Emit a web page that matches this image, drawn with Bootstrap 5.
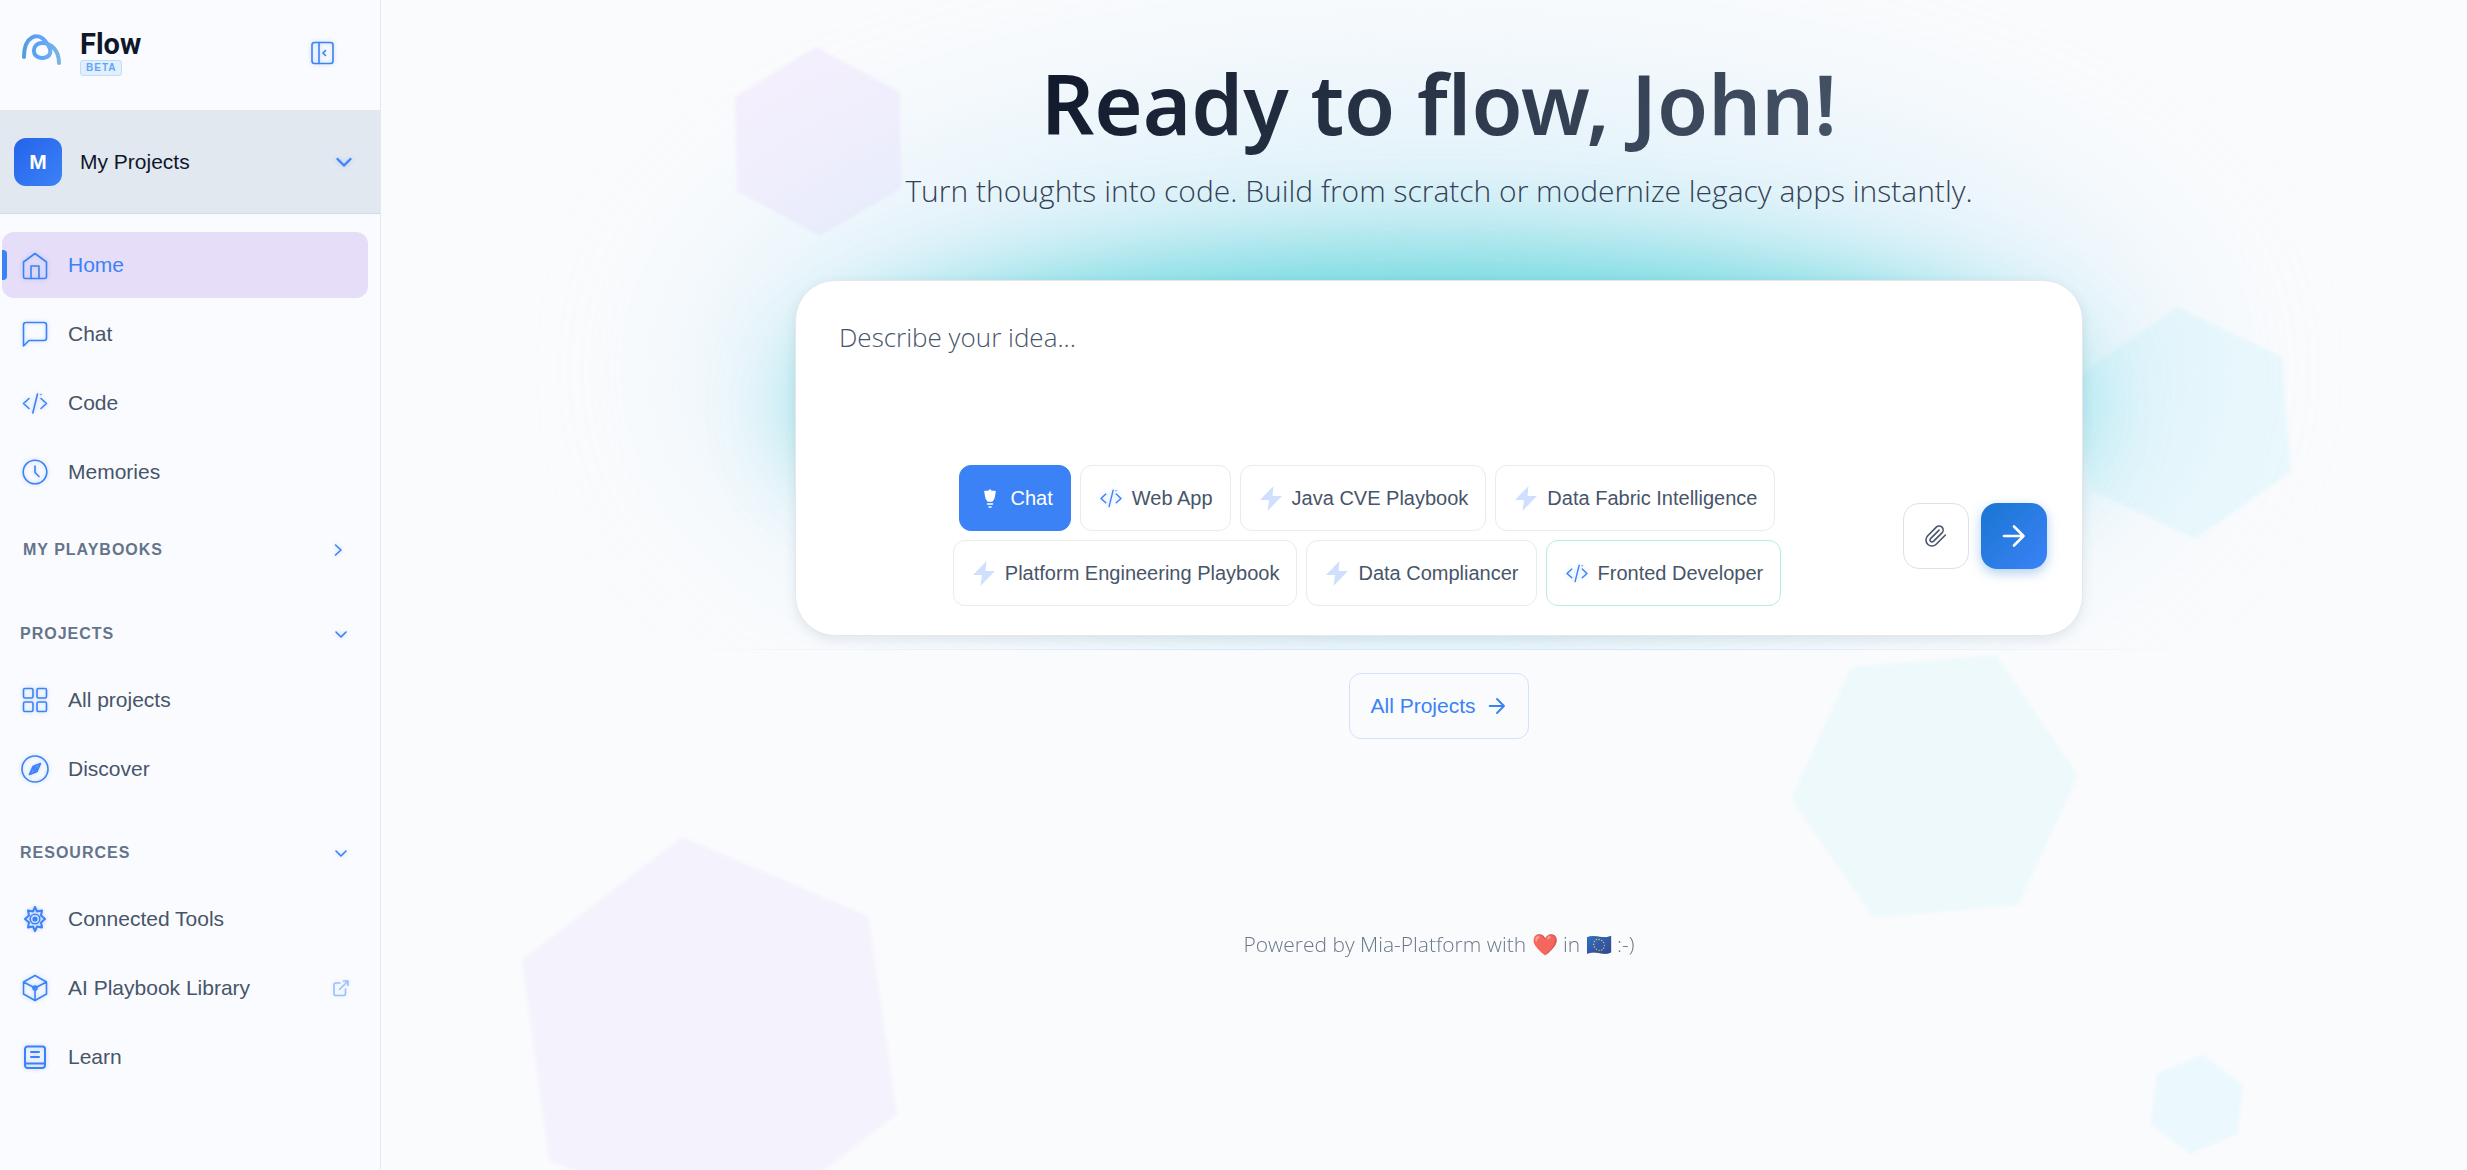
<!DOCTYPE html>
<html lang="en">
<head>
<meta charset="utf-8">
<meta name="viewport" content="width=device-width, initial-scale=1">
<title>Flow</title>
<link href="https://cdn.jsdelivr.net/npm/bootstrap@5.3.0/dist/css/bootstrap.min.css" rel="stylesheet">
<style>
  :root { --flow-blue: #3b82f6; --flow-text: #475569; }
  body { background: #fafbfd; font-family: "Liberation Sans", Arial, sans-serif; font-size: 21px; line-height: 24px; color: var(--flow-text); }
  .ico { width: 30px; height: 30px; flex: none; fill: none; stroke: currentColor; stroke-width: 1.6; stroke-linecap: round; stroke-linejoin: round; }
  .ico-26 { width: 26px; height: 26px; }
  .ico-24 { width: 24px; height: 24px; }
  .ico-22 { width: 22px; height: 22px; }
  .ico-bold { stroke-width: 2.6; }
  .plain { background: none; border: 0; padding: 0; text-align: left; color: inherit; }
  .glowing { filter: drop-shadow(0 0 2px rgba(59,130,246,.35)); color: var(--flow-blue); }

  .sidebar { width: 381px; flex: none; border-right: 1px solid #e6e9ef; background: #fafbfe; position: relative; }
  .side-head { height: 110px; padding: 0 42px 4px 16px; }
  .logo-mark { width: 50px; height: 50px; stroke-width: 4; }
  .app-name { font: 700 29px/32px Roboto, sans-serif; color: #0f172a; }
  .beta-tag { font-size: 10px; line-height: 14px; font-weight: 700; letter-spacing: 1px; color: #60a5fa; background: #e4effe; border: 1px solid #bfdbfe; border-radius: 3px; padding: 0 5px; }
  .brand-text { padding: 0 0 2px 14px; }
  .switcher { height: 104px; background: #e1e8f0; border-bottom: 1px solid #d3dbe6; padding: 0 21px 0 14px; color: #0f172a; gap: 18px; }
  .avatar-tile { width: 48px; height: 48px; border-radius: 12px; background: linear-gradient(135deg,#2563eb,#3b82f6); color: #fff; font-weight: 700; }
  .side-nav { padding: 18px 12px 0 2px; }
  .side-link { height: 66px; margin-bottom: 3px; padding: 0 12px 0 18px; gap: 18px; border-radius: 12px; color: var(--flow-text); text-decoration: none; position: relative; }
  .side-link.active { background: #e6ddf8; color: var(--flow-blue); }
  .side-link.active::before { content: ""; position: absolute; left: 0; top: 18px; height: 30px; width: 5px; border-radius: 0 4px 4px 0; background: var(--flow-blue); }
  .side-title { height: 48px; padding: 0 12px 0 18px; margin: 27px 0 9px; font-size: 16px; font-weight: 700; letter-spacing: 1px; color: #64748b; width: 100%; }
  .side-title.folded { margin: 21px 0 36px; padding: 0 15px 0 21px; }

  .workspace { min-width: 0; overflow: hidden; position: relative; padding-left: 30px; }
  .shapes { position: absolute; inset: 0; width: 100%; height: 100%; }
  .hero { position: relative; overflow: hidden; padding: 48px 24px 13px; }
  .hero-title { position: relative; z-index: 1; margin: 0 0 13px; font-family: "Noto Sans", sans-serif; font-weight: 600; font-size: 83px; line-height: 110px; background: linear-gradient(135deg,#0f172a,#475569); -webkit-background-clip: text; background-clip: text; color: transparent; }
  .hero-sub { position: relative; z-index: 1; margin: 0 0 69px; font-family: "Open Sans", "Noto Sans", sans-serif; font-weight: 300; font-size: 30px; line-height: 40px; color: #334155; }
  .prompt-wrap { width: 100%; max-width: 1288px; position: relative; }
  .aura, .aura-wide { position: absolute; border-radius: 50%; }
  .aura { left: 10px; right: 10px; top: -28px; height: 310px; background: #35cdd0; filter: blur(50px); opacity: .75; }
  .aura-wide { left: -90px; right: -90px; top: -190px; height: 560px; background: #b6e2f6; filter: blur(90px); opacity: .38; }
  .prompt-box { position: relative; background: #fff; border: 1px solid #e4e8ec; border-radius: 40px; padding: 35px 35px 29px; box-shadow: 0 4px 12px rgba(30,60,80,.10); }
  .prompt-box textarea { display: block; width: 100%; height: 149px; border: 0; resize: none; outline: 0; background: none; padding: 3px 8px; font: 300 26px/36px "Open Sans", sans-serif; color: #334155; }
  .prompt-box textarea::placeholder { color: #475569; opacity: 1; }
  .chips { gap: 9px; }
  .chip { height: 66px; border: 1px solid #e9ebee; border-radius: 12px; background: #fff; color: var(--flow-text); padding: 0 17px; gap: 8px; font-size: 20px; }
  .chip.on { background: var(--flow-blue); border-color: var(--flow-blue); color: #fff; }
  .chip.fresh { border-color: #b5ece4; }
  .sq-btn { width: 66px; height: 66px; flex: none; border-radius: 16px; border: 1px solid #dfe1e5; background: #fff; color: var(--flow-text); padding: 0; }
  .send-btn { border: 0; background: linear-gradient(135deg,#1976d2,#3b82f6); color: #fff; box-shadow: 0 4px 12px rgba(25,118,210,.35); }
  .tools { gap: 12px; }
  .rule-line { position: relative; height: 1px; margin: 0 12%; background: linear-gradient(90deg,transparent,#d6e5fa 35%,#d6e5fa 65%,transparent); }
  .all-btn { position: relative; height: 66px; border: 1px solid #d2e2fc; border-radius: 12px; color: var(--flow-blue); padding: 0 20px; gap: 10px; text-decoration: none; margin-top: 23px; }
  .credit { position: relative; margin: 190px 0 0; font: 300 21px/30px "Open Sans", sans-serif; color: #475569; opacity: .8; }
</style>
</head>
<body>
<svg width="0" height="0" class="position-absolute" aria-hidden="true">
  <defs>
    <symbol id="i-code" viewBox="0 0 30 30"><path d="M9 10.500 3.500 15.500 9 20.500M21 10.500l5.500 5L21 20.500M17.500 6 12.800 25"/><path d="M20.500 6.500h1" opacity=".6"/></symbol>
    <symbol id="i-bolt" viewBox="0 0 26 26"><path d="M15.500 1 2 15h9l-1.500 11L24 11h-9.500z" fill="#cfe0fd" stroke="none"/></symbol>
    <symbol id="i-down" viewBox="0 0 30 30"><path d="m8.500 12 6.500 6.500 6.500-6.500" stroke-width="2.200"/></symbol>
    <symbol id="i-arrow" viewBox="0 0 30 30"><path d="M5 15h19M15 5.500 24.500 15 15 24.500"/></symbol>
  </defs>
</svg>

<div class="d-flex min-vh-100">
  <aside class="sidebar d-flex flex-column">
    <header class="side-head d-flex align-items-center">
      <svg class="ico logo-mark" viewBox="0 0 50 50" aria-hidden="true">
        <defs><linearGradient id="lg" x1="0" x2="1"><stop stop-color="#549ddf"/><stop offset=".5" stop-color="#60a5fa"/><stop offset="1" stop-color="#7ab3e2"/></linearGradient></defs>
        <path stroke="url(#lg)" d="M8 29C8 8 22 3 30 14c7 9 5 15-3 16-12 1-12-15-1-15 9 0 17 7 17 20"/>
      </svg>
      <div class="brand-text d-flex flex-column align-items-start me-auto">
        <span class="app-name">Flow</span>
        <span class="beta-tag">BETA</span>
      </div>
      <button class="plain d-flex" aria-label="Collapse sidebar">
        <svg class="ico glowing" viewBox="0 0 30 30"><rect x="4" y="4.500" width="21" height="21" rx="2.500"/><path d="M11 4.500v21M17.500 12.500 15 15l2.500 2.500"/></svg>
      </button>
    </header>

    <button class="plain switcher d-flex align-items-center w-100">
      <span class="avatar-tile d-flex align-items-center justify-content-center">M</span>
      <span class="me-auto">My Projects</span>
      <svg class="ico glowing"><use href="#i-down"/></svg>
    </button>

    <nav class="side-nav">
      <a class="side-link active d-flex align-items-center" href="#"><svg class="ico glowing" viewBox="0 0 30 30"><path d="M3.500 12 15 3.500 26.500 12v14.500a2 2 0 0 1-2 2h-19a2 2 0 0 1-2-2zM11 28.500V16h8v12.500"/></svg>Home</a>
      <a class="side-link d-flex align-items-center" href="#"><svg class="ico glowing" viewBox="0 0 30 30"><path d="M3.500 27V6a2.500 2.500 0 0 1 2.500-2.500h18A2.500 2.500 0 0 1 26.500 6v13a2.500 2.500 0 0 1-2.500 2.500H9z"/></svg>Chat</a>
      <a class="side-link d-flex align-items-center" href="#"><svg class="ico glowing"><use href="#i-code"/></svg>Code</a>
      <a class="side-link d-flex align-items-center" href="#"><svg class="ico glowing" viewBox="0 0 30 30"><circle cx="15" cy="15" r="11.800"/><path d="M15 9v6.500l4 4"/></svg>Memories</a>
      <button class="plain side-title folded d-flex align-items-center justify-content-between">MY PLAYBOOKS<svg class="ico glowing" viewBox="0 0 30 30"><path d="m12.500 10 5.500 5-5.500 5"/></svg></button>
      <button class="plain side-title d-flex align-items-center justify-content-between">PROJECTS<svg class="ico glowing" viewBox="0 0 30 30"><path d="m10 13 5 5 5-5"/></svg></button>
      <a class="side-link d-flex align-items-center" href="#"><svg class="ico glowing" viewBox="0 0 30 30"><rect x="3.500" y="3.500" width="9.500" height="9.500" rx="1.500"/><rect x="17" y="3.500" width="9.500" height="9.500" rx="1.500"/><rect x="3.500" y="17" width="9.500" height="9.500" rx="1.500"/><rect x="17" y="17" width="9.500" height="9.500" rx="1.500"/></svg>All projects</a>
      <a class="side-link d-flex align-items-center" href="#"><svg class="ico glowing" viewBox="0 0 30 30"><circle cx="15" cy="15" r="13"/><path d="m20.500 9.500-3.500 8-7.500 3 3.500-8z" fill="currentColor" fill-opacity=".75"/><circle cx="15" cy="15" r="1.500"/></svg>Discover</a>
      <button class="plain side-title d-flex align-items-center justify-content-between">RESOURCES<svg class="ico glowing" viewBox="0 0 30 30"><path d="m10 13 5 5 5-5"/></svg></button>
      <a class="side-link d-flex align-items-center" href="#"><svg class="ico glowing" viewBox="0 0 30 30"><path d="m15 3 2 4.500 5-1-1 5 4 3.500-4 3.500 1 5-5-1-2 4.500-2-4.500-5 1 1-5L5 15l4-3.500-1-5 5 1z" stroke-width="2"/><circle cx="15" cy="15" r="4.800"/><circle cx="15" cy="15" r="1.800" fill="currentColor"/></svg>Connected Tools</a>
      <a class="side-link d-flex align-items-center" href="#"><svg class="ico glowing" viewBox="0 0 30 30"><path d="M15 2.500 26.500 9v12L15 27.500 3.500 21V9zM3.500 9 15 15l11.500-6M15 15v12.500"/><circle cx="15" cy="15" r="2"/></svg><span class="me-auto">AI Playbook Library</span><svg class="ico glowing opacity-50" viewBox="0 0 30 30"><path d="M14 10H9.500A1.500 1.500 0 0 0 8 11.500v9.500A1.500 1.500 0 0 0 9.500 22.500H18a1.500 1.500 0 0 0 1.500-1.500v-5M17.500 8H22v4.500M22 8l-8.500 8.500"/></svg></a>
      <a class="side-link d-flex align-items-center" href="#"><svg class="ico glowing" viewBox="0 0 30 30"><path d="M7.500 4.500h15A2.500 2.500 0 0 1 25 7v16.500a2.500 2.500 0 0 1-2.500 2.500h-15A2.500 2.500 0 0 1 5 23.500V7a2.500 2.500 0 0 1 2.500-2.500zM5 21.500h20M11 10h8M11 15h8" stroke-width="2"/></svg>Learn</a>
    </nav>
  </aside>

  <main class="workspace flex-grow-1">
    <svg class="shapes" viewBox="381 0 2086 1170" preserveAspectRatio="xMidYMin slice" aria-hidden="true">
      <defs><filter id="soft" color-interpolation-filters="sRGB"><feGaussianBlur stdDeviation="1.500"/></filter></defs>
      <g filter="url(#soft)">
        <path fill="#f4effd" d="m816 47 84 45 1 96-81 48-83-45-2-94z"/>
        <path fill="#eaf8fc" d="m2177 307 105 50 9 115-96 67-104-49-10-116z"/>
        <path fill="#eef9fb" d="m1851 667 145-12 82 120-60 130-144 13-83-119z"/>
        <path fill="#ebf8fd" d="m2203 1055 40 30-6 49-47 20-39-30 6-50z"/>
        <path fill="#f4f2fc" d="m682 837 186 79 29 198-163 126-185-80-27-200z"/>
      </g>
    </svg>
    <section class="hero d-flex flex-column align-items-center">
      <h1 class="hero-title text-center">Ready to flow, John!</h1>
      <p class="hero-sub text-center">Turn thoughts into code. Build from scratch or modernize legacy apps instantly.</p>
      <div class="prompt-wrap">
        <div class="aura-wide"></div><div class="aura"></div>
        <form class="prompt-box">
          <textarea aria-label="Describe your idea" placeholder="Describe your idea..."></textarea>
          <div class="d-flex align-items-center">
            <div class="chips d-flex flex-wrap justify-content-center flex-grow-1">
              <button type="button" class="chip on d-flex align-items-center"><svg class="ico ico-26" viewBox="0 0 26 26"><path d="m13 5 1.500 1.500L18 6.500 17 12c0 2-1.500 3.500-2 4h-4c-.5-.5-2-2-2-4L8 6.500l3.500 0zM10.500 19h5M12 22h2" fill="currentColor"/></svg>Chat</button>
              <button type="button" class="chip d-flex align-items-center"><svg class="ico ico-26 glowing"><use href="#i-code"/></svg>Web App</button>
              <button type="button" class="chip d-flex align-items-center"><svg class="ico ico-26"><use href="#i-bolt"/></svg>Java CVE Playbook</button>
              <button type="button" class="chip d-flex align-items-center"><svg class="ico ico-26"><use href="#i-bolt"/></svg>Data Fabric Intelligence</button>
              <button type="button" class="chip d-flex align-items-center"><svg class="ico ico-26"><use href="#i-bolt"/></svg>Platform Engineering Playbook</button>
              <button type="button" class="chip d-flex align-items-center"><svg class="ico ico-26"><use href="#i-bolt"/></svg>Data Compliancer</button>
              <button type="button" class="chip fresh d-flex align-items-center"><svg class="ico ico-26 glowing"><use href="#i-code"/></svg>Fronted Developer</button>
            </div>
            <div class="tools d-flex">
              <button type="button" class="sq-btn d-flex align-items-center justify-content-center" aria-label="Attach file"><svg class="ico ico-24" viewBox="0 0 24 24"><path d="m21.400 11.050-9.190 9.190a6 6 0 0 1-8.490-8.490l8.570-8.570A4 4 0 1 1 18 8.840l-8.590 8.570a2 2 0 0 1-2.830-2.830l8.490-8.480"/></svg></button>
              <button class="sq-btn send-btn d-flex align-items-center justify-content-center" aria-label="Send"><svg class="ico ico-bold"><use href="#i-arrow"/></svg></button>
            </div>
          </div>
        </form>
      </div>
    </section>
    <div class="rule-line"></div>
    <div class="d-flex flex-column align-items-center">
      <a class="all-btn d-inline-flex align-items-center" href="#">All Projects<svg class="ico ico-22 ico-bold"><use href="#i-arrow"/></svg></a>
      <p class="credit">Powered by Mia-Platform with ❤️ in 🇪🇺 :-)</p>
    </div>
  </main>
</div>
<script src="https://cdn.jsdelivr.net/npm/bootstrap@5.3.0/dist/js/bootstrap.bundle.min.js"></script>
</body>
</html>
